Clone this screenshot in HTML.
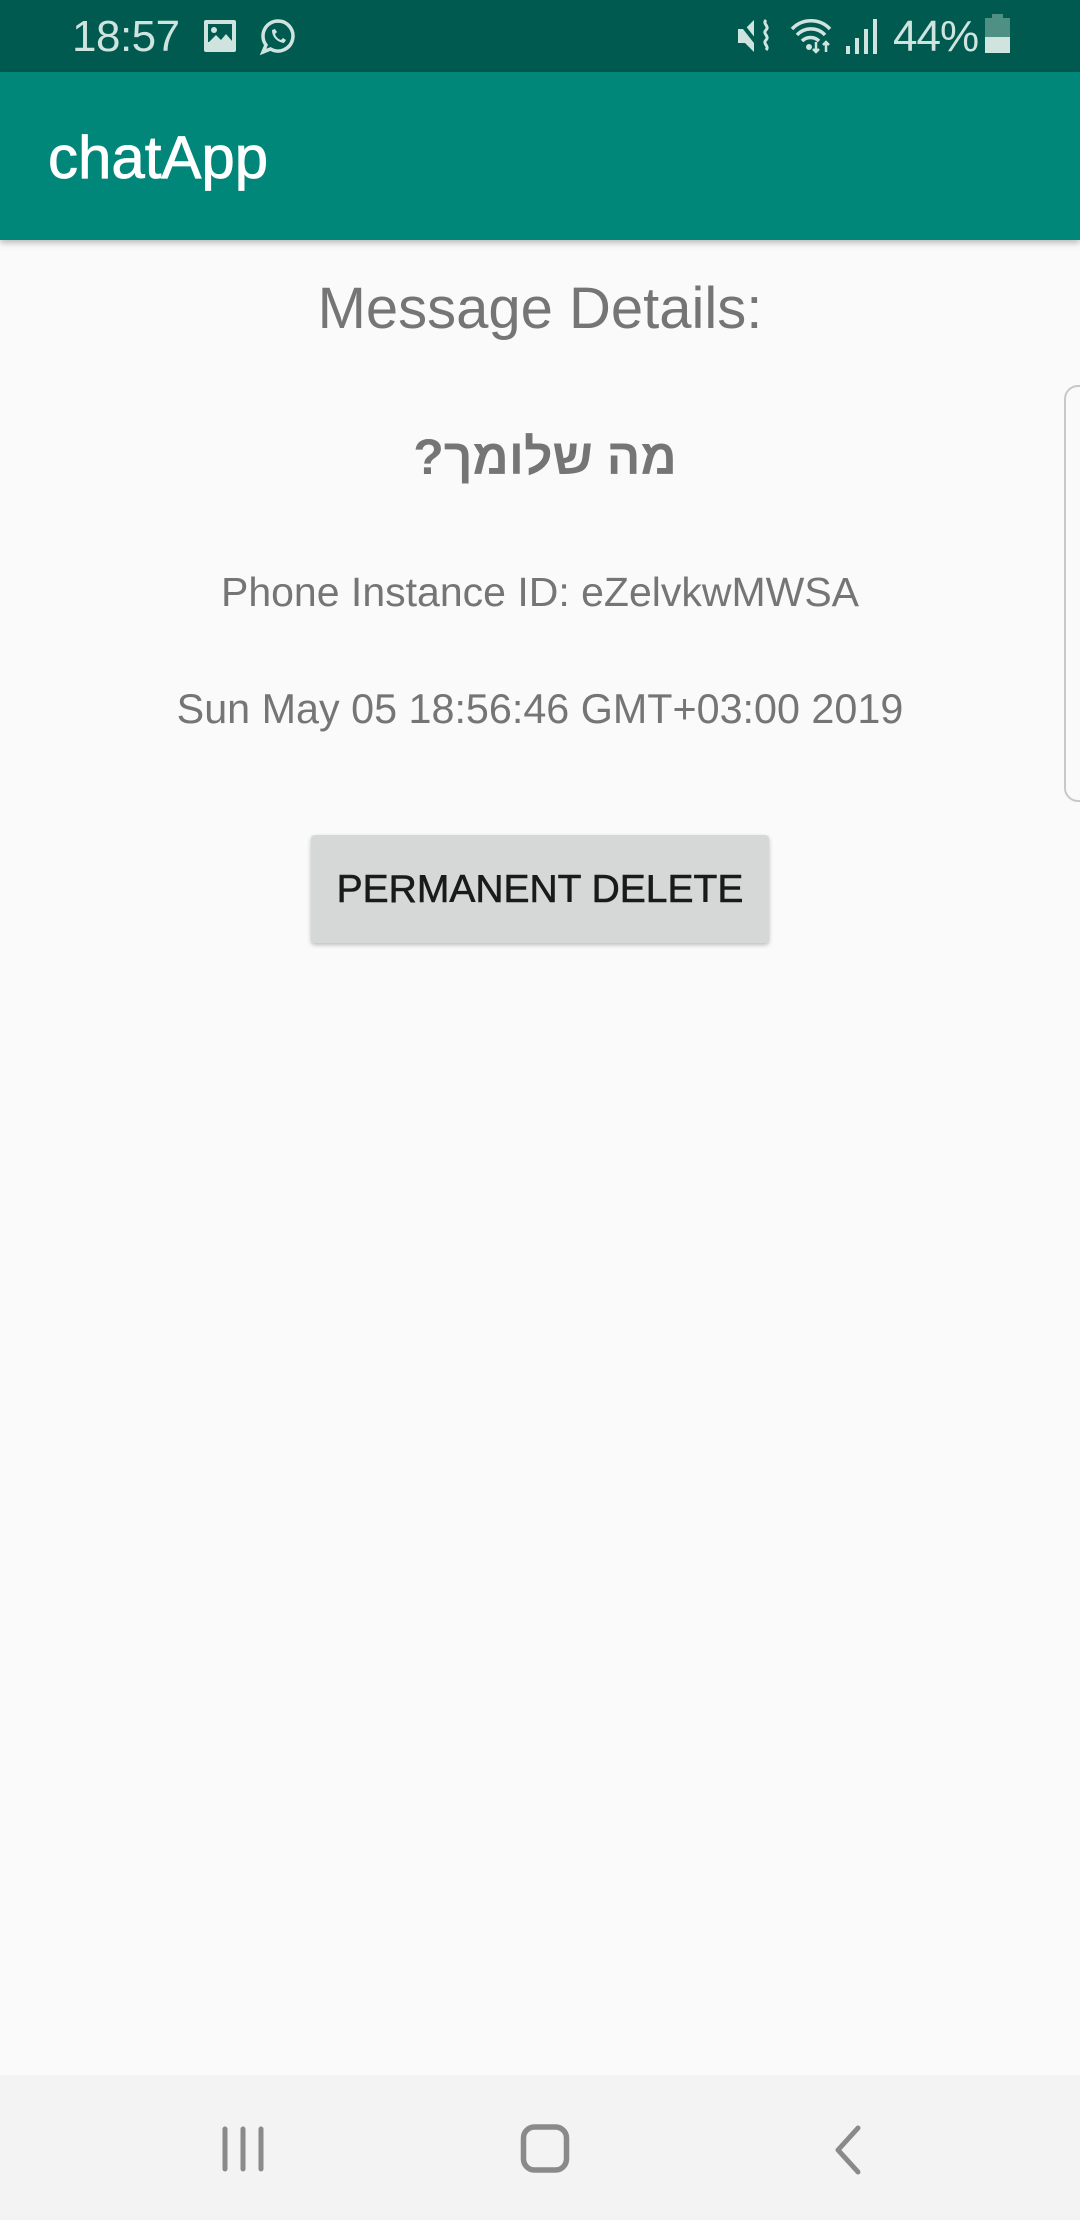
<!DOCTYPE html>
<html><head><meta charset="utf-8"><style>
html,body{margin:0;padding:0}
body{width:1080px;height:2220px;position:relative;background:#fafafa;font-family:"Liberation Sans",sans-serif;overflow:hidden}
.abs{position:absolute}
#sb{left:0;top:0;width:1080px;height:72px;background:#005a4f}
#ab{left:0;top:72px;width:1080px;height:168px;background:#00877a;box-shadow:0 3px 6px rgba(0,0,0,.25)}
.c{left:0;width:1080px;text-align:center;color:#757575;white-space:nowrap}
#nav{left:0;top:2075px;width:1080px;height:145px;background:#f3f3f3}
</style></head><body>
<div id="sb" class="abs">
 <div class="abs" style="left:72px;top:12px;font-size:44px;color:#cfe3df;letter-spacing:-0.5px">18:57</div>
 <svg class="abs" style="left:203px;top:19px" width="34" height="34" viewBox="0 0 34 34"><rect x="1" y="1" width="32" height="32" rx="2" fill="#cfe3df"/><rect x="5" y="5" width="24" height="18" fill="#005a4f"/><circle cx="11" cy="11" r="3" fill="#cfe3df"/><path d="M5 24 L13 16 L18 21 L23 15 L29 22 L29 29 L5 29Z" fill="#cfe3df"/></svg>
 <svg class="abs" style="left:258px;top:17px" width="40" height="40" viewBox="0 0 40 40"><path d="M20 4a15 15 0 1 1-7.5 28L5 35l3-7A15 15 0 0 1 20 4z" fill="none" stroke="#cfe3df" stroke-width="3.5"/><path d="M14 13c0 7 5 12 12 13l2-3-3-2-2 2c-3-1-5-3-6-6l2-2-2-3z" fill="#cfe3df"/></svg>
 <svg class="abs" style="left:736px;top:16px" width="40" height="40" viewBox="0 0 40 40"><path d="M2 13h7l9-9v32l-9-9H2z" fill="#cfe3df"/><path d="M4 6l22 28" stroke="#005a4f" stroke-width="4"/><path d="M30 4c-4 4 4 6 0 10s4 6 0 10 4 6 0 10" fill="none" stroke="#cfe3df" stroke-width="3"/></svg>
 <svg class="abs" style="left:789px;top:16px" width="44" height="40" viewBox="0 0 44 40"><path d="M3 13a26 26 0 0 1 38 0M8 19a19 19 0 0 1 28 0M13 25a12 12 0 0 1 17 0" fill="none" stroke="#cfe3df" stroke-width="3.5"/><circle cx="20" cy="31" r="3" fill="#cfe3df"/><path d="M27 26v10M24 33l3 3 3-3M37 36V26M34 29l3-3 3 3" fill="none" stroke="#cfe3df" stroke-width="2.5"/></svg>
 <svg class="abs" style="left:845px;top:16px" width="34" height="40" viewBox="0 0 34 40"><rect x="1" y="30" width="4" height="8" fill="#cfe3df"/><rect x="10" y="22" width="4" height="16" fill="#cfe3df"/><rect x="19" y="13" width="4" height="25" fill="#cfe3df"/><rect x="28" y="3" width="4" height="35" fill="#cfe3df"/></svg>
 <div class="abs" style="left:893px;top:12px;font-size:44px;color:#cfe3df;letter-spacing:-1px">44%</div>
 <div class="abs" style="left:985px;top:18px;width:25px;height:35px;background:#4f9085"></div>
 <div class="abs" style="left:992px;top:14px;width:11px;height:5px;background:#4f9085"></div>
 <div class="abs" style="left:985px;top:37px;width:25px;height:16px;background:#cfe3df"></div>
</div>
<div id="ab" class="abs"><div class="abs" style="left:48px;top:51px;font-size:60px;color:#fff;-webkit-text-stroke:0.8px #fff">chatApp</div></div>
<div class="abs c" style="top:275px;font-size:58px">Message Details:</div>
<div class="abs c" dir="rtl" style="top:428px;font-size:50px;font-weight:bold;left:5px;font-family:'Liberation Sans','DejaVu Sans',sans-serif">מה שלומך?</div>
<div class="abs c" style="top:569px;font-size:41px">Phone Instance ID: eZelvkwMWSA</div>
<div class="abs c" style="top:686px;font-size:41.3px">Sun May 05 18:56:46 GMT+03:00 2019</div>
<div class="abs" style="left:311px;top:835px;width:458px;height:108px;background:#d6d7d7;border-radius:4px;box-shadow:0 2px 4px rgba(0,0,0,.25);text-align:center;line-height:110px;font-size:39px;color:#1a1a1a;-webkit-text-stroke:0.6px #1a1a1a">PERMANENT DELETE</div>
<div class="abs" style="left:1064px;top:385px;width:30px;height:413px;border:2px solid #c8c8c8;border-radius:14px;background:#fafafa"></div>
<div id="nav" class="abs">
 <svg class="abs" style="left:210px;top:50px" width="70" height="50" viewBox="0 0 70 50"><path d="M15 4v40M33 4v40M51 4v40" stroke="#8a8a8a" stroke-width="5" stroke-linecap="round"/></svg>
 <svg class="abs" style="left:515px;top:48px" width="60" height="54" viewBox="0 0 60 54"><rect x="8.5" y="4" width="43" height="43" rx="11" fill="none" stroke="#8a8a8a" stroke-width="5.5"/></svg>
 <svg class="abs" style="left:825px;top:48px" width="50" height="54" viewBox="0 0 50 54"><path d="M33 5L13 27l20 22" fill="none" stroke="#8a8a8a" stroke-width="5" stroke-linecap="round" stroke-linejoin="round"/></svg>
</div>
</body></html>
